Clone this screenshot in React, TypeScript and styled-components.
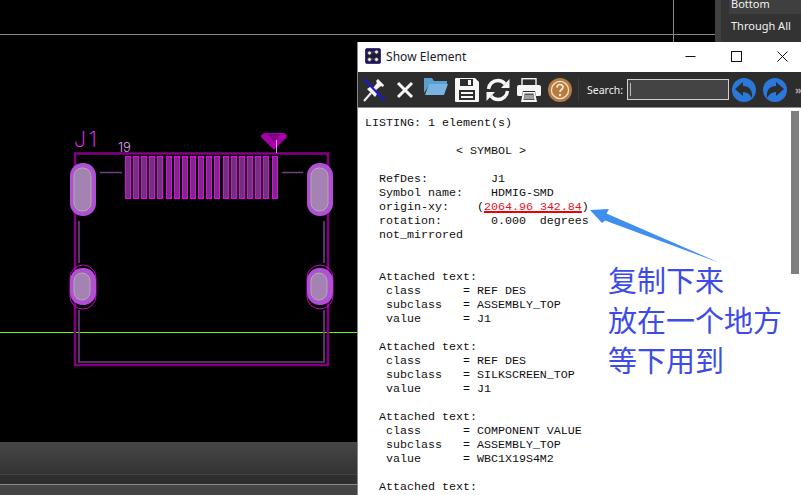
import React from "react";
import styled, { createGlobalStyle } from "styled-components";

const Global = createGlobalStyle`
  html, body { margin: 0; padding: 0; background: #000; overflow: hidden; }
  #root { width: 801px; height: 495px; }
`;

const Page = styled.div`
  position: relative;
  width: 801px;
  height: 495px;
  display: grid;
  grid-template-rows: 442px 32px 1px 9px 1px 10px;
  overflow: hidden;
  font-family: "Noto Sans", "Liberation Sans", sans-serif;
`;
const Workspace = styled.div`
  display: grid;
  grid-template-columns: 715px 86px;
  min-height: 0;
`;
const CanvasSvg = styled.svg`
  display: block;
  width: 715px;
  height: 442px;
  background: #000;
`;
const SidePanel = styled.aside`
  background: #333;
  border-left: 6px solid #404040;
  padding-left: 8px;
  font-size: 11px;
  color: #f2f2f2;
  display: flex;
  flex-direction: column;
  align-items: stretch;
`;
const SideRow = styled.div<{ $active?: boolean }>`
  height: ${(p) => (p.$active ? "14px" : "25px")};
  line-height: ${(p) => (p.$active ? "8px" : "24px")};
  padding-left: 2px;
  background: ${(p) => (p.$active ? "#3f3f3f" : "transparent")};
  white-space: nowrap;
`;
const GradientBand = styled.div`
  background: linear-gradient(#474747, #333333);
`;
const Rule = styled.div<{ $c: string }>`
  background: ${(p) => p.$c};
`;

const Window = styled.section`
  position: absolute;
  left: 357px;
  top: 42px;
  width: 444px;
  height: 453px;
  box-sizing: border-box;
  border-left: 1px solid #8a8a8a;
  background: #fff;
  display: flex;
  flex-direction: column;
`;
const TitleBar = styled.header`
  height: 30px;
  box-sizing: border-box;
  padding: 0 0 2px 7px;
  display: flex;
  align-items: center;
  background: #fff;
  flex: none;
`;
const TitleText = styled.span`
  margin-left: 5px;
  font-size: 12px;
  color: #1a1a2a;
  letter-spacing: 0.05px;
`;
const WinControls = styled.div`
  margin-left: auto;
  display: flex;
  align-items: center;
  padding-right: 13px;
  gap: 35px;
`;
const Toolbar = styled.div`
  height: 35px;
  flex: none;
  display: flex;
  align-items: center;
  background: #2d2d2d;
  border-bottom: 1px solid #8c8c8c;
  padding-left: 5px;
`;
const IconSlot = styled.span<{ $w: number; $mr: number; $mb?: number }>`
  display: flex;
  width: ${(p) => p.$w}px;
  margin-right: ${(p) => p.$mr}px;
  margin-bottom: ${(p) => p.$mb ?? 0}px;
  flex: none;
`;
const Sep = styled.span`
  width: 1px;
  height: 24px;
  background: #3b3b3b;
  margin: 0 8px 0 6px;
  flex: none;
`;
const SearchLabel = styled.label`
  color: #f0f0f0;
  font-size: 10.5px;
  font-weight: 400;
  width: 40px;
  flex: none;
  white-space: nowrap;
`;
const SearchBox = styled.div`
  width: 102px;
  height: 21px;
  box-sizing: border-box;
  border: 1px solid #d0d0d0;
  background: #444;
  margin-right: 3px;
  flex: none;
  display: flex;
  align-items: center;
  padding-left: 2px;
`;
const Caret = styled.span`
  width: 1px;
  height: 13px;
  background: #bbb;
`;
const More = styled.span`
  color: #aaa;
  font-size: 11px;
  font-weight: 700;
  margin-left: 8px;
  flex: none;
  line-height: 1;
`;
const Content = styled.div`
  position: relative;
  flex: 1;
  min-height: 0;
  overflow: hidden;
  background: #fff;
`;
const Listing = styled.pre`
  margin: 0;
  padding: 8px 0 0 7px;
  font-family: "Liberation Mono", "Courier New", monospace;
  font-size: 11.67px;
  line-height: 14px;
  color: #101010;
`;
const Coord = styled.span`
  color: #e8102a;
  text-decoration: underline;
  text-decoration-color: #f00000;
  text-decoration-thickness: 1.5px;
  text-underline-offset: 1px;
`;
const ScrollThumb = styled.div`
  position: absolute;
  right: 2px;
  top: 3px;
  width: 8px;
  height: 163px;
  background: #7f7f7f;
`;
const Note = styled.div`
  position: absolute;
  left: 608px;
  top: 259px;
  font-family: "Noto Sans CJK SC", "Noto Sans", sans-serif;
  font-size: 29px;
  line-height: 40px;
  color: #3d4ce8;
  white-space: nowrap;
`;
const ArrowSvg = styled.svg`
  position: absolute;
  left: 585px;
  top: 205px;
  width: 140px;
  height: 62px;
`;

const fingers = [125, 133, 141, 149, 157, 166, 174, 182, 190, 198, 206, 214, 223, 231, 239, 247, 255, 263, 272];

const BigPad = ({ x }: { x: number }) => (
  <g>
    <rect x={x} y={163} width={26} height={53} rx={12.5} fill="#b050d4" />
    <rect x={x + 4} y={168} width={17} height={43} rx={8} fill="#a482b4" stroke="#aeb0a0" strokeWidth={1} />
  </g>
);
const SmallPad = ({ x }: { x: number }) => (
  <g>
    <rect x={x} y={265} width={26} height={44} rx={13} fill="none" stroke="#ff00ff" strokeWidth={0.8} />
    <rect x={x} y={268} width={26} height={37} rx={12.5} fill="#b050d4" />
    <rect x={x + 4} y={273} width={16} height={27} rx={8} fill="#a482b4" stroke="#aeb0a0" strokeWidth={1} />
  </g>
);

const Canvas = () => (
  <CanvasSvg viewBox="0 0 715 442">
    <line x1={0} y1={34.5} x2={715} y2={34.5} stroke="#8a8a8a" />
    <line x1={673.5} y1={0} x2={673.5} y2={42} stroke="#8a8a8a" />
    <line x1={0} y1={332.5} x2={357} y2={332.5} stroke="#66ff00" />
    <rect x={75} y={153.5} width={253} height={211.5} fill="none" stroke="#800080" strokeWidth={2.6} />
    <path
      d="M79 221V263M79 310V362H324V310M324 263V221M100 172.5H122M282 172.5H303"
      fill="none"
      stroke="#6e3f85"
      strokeWidth={1.6}
    />
    {fingers.map((x) => (
      <rect key={x} x={x + 0.5} y={156.5} width={5} height={42} fill="#73307f" stroke="#f000f0" strokeWidth={1} />
    ))}
    <BigPad x={70} />
    <BigPad x={307} />
    <SmallPad x={70} />
    <SmallPad x={307} />
    <path d="M261 137Q261 133 266 133H282Q287 133 287 137L274 150Z" fill="#a800a8" />
    <path d="M268 134H280L274 142Z" fill="#7a0080" />
    <line x1={276.5} y1={140} x2={276.5} y2={153} stroke="#e090ff" />
    <text x={74} y={147} fill="#ff30ff" fontFamily="Inter, sans-serif" fontWeight={200} fontSize={21} letterSpacing={3}>
      J1
    </text>
    <text x={118} y={152} fill="#e0a0ff" fontFamily="Inter, sans-serif" fontWeight={300} fontSize={13}>
      19
    </text>
  </CanvasSvg>
);

const AppIcon = () => (
  <svg width="16" height="16" viewBox="0 0 16 16">
    <rect x="0.5" y="0.5" width="15" height="15" rx="1.5" fill="#1b1a3a" stroke="#4a2bb0" />
    <path d="M4 5L11 3M4 11L12 11" stroke="#6030c0" />
    <circle cx="4.5" cy="5" r="2" fill="#e8e8e0" stroke="#333" strokeWidth="0.8" />
    <circle cx="11.5" cy="4" r="2" fill="#e8e8e0" stroke="#333" strokeWidth="0.8" />
    <circle cx="4.5" cy="11.5" r="2" fill="#e8e8e0" stroke="#333" strokeWidth="0.8" />
    <circle cx="11.5" cy="11.5" r="2" fill="#e8e8e0" stroke="#333" strokeWidth="0.8" />
  </svg>
);
const MinIcon = () => (
  <svg width="11" height="11" viewBox="0 0 11 11">
    <line x1="0.5" y1="5.5" x2="10.5" y2="5.5" stroke="#111" />
  </svg>
);
const MaxIcon = () => (
  <svg width="11" height="11" viewBox="0 0 11 11">
    <rect x="0.5" y="0.5" width="10" height="10" fill="none" stroke="#111" />
  </svg>
);
const CloseIcon = () => (
  <svg width="11" height="11" viewBox="0 0 11 11">
    <path d="M0.5 0.5L10.5 10.5M10.5 0.5L0.5 10.5" stroke="#111" />
  </svg>
);
const PinIcon = () => (
  <svg width="23" height="24" viewBox="0 0 23 24">
    <path d="M1 23L8 15" stroke="#eee" strokeWidth="2" />
    <path d="M4 11L12 19L14 16L13 12L18 8L20 9L21 7L15 1L13 3L14 5L10 10L7 9Z" fill="#f4f4f4" />
    <line x1="1" y1="1" x2="22" y2="23" stroke="#1818e0" strokeWidth="2" />
  </svg>
);
const XIcon = () => (
  <svg width="18" height="18" viewBox="0 0 18 18">
    <path d="M2 2L16 16M16 2L2 16" stroke="#f6f6f6" strokeWidth="3" />
  </svg>
);
const FolderIcon = () => (
  <svg width="24" height="19" viewBox="0 0 24 19">
    <path d="M0 1H8L10 4H23V8H5L2 13L0 16Z" fill="#5b9ed0" />
    <path d="M5 7H24L20 18H1Z" fill="#78b4e2" />
  </svg>
);
const SaveIcon = () => (
  <svg width="24" height="24" viewBox="0 0 24 24">
    <path d="M1 0H20L24 4V23Q24 24 23 24H1Q0 24 0 23V1Q0 0 1 0Z" fill="#f6f6f6" />
    <rect x="5" y="1" width="13" height="7" fill="#2d2d2d" />
    <rect x="13" y="2" width="3" height="5" fill="#f6f6f6" />
    <rect x="4" y="12" width="16" height="10" fill="#2d2d2d" />
    <path d="M6 15H18M6 19H18" stroke="#f6f6f6" strokeWidth="1.8" />
  </svg>
);
const RefreshIcon = () => (
  <svg width="24" height="24" viewBox="0 0 24 24" fill="none">
    <path d="M2.5 11C3 6 7 2.5 12 2.5C15 2.5 17.5 4 19 6" stroke="#f6f6f6" strokeWidth="3.4" />
    <path d="M23.5 1V10H15Z" fill="#f6f6f6" />
    <path d="M21.5 13C21 18 17 21.5 12 21.5C9 21.5 6.5 20 5 18" stroke="#f6f6f6" strokeWidth="3.4" />
    <path d="M0.5 23V14H9Z" fill="#f6f6f6" />
  </svg>
);
const PrintIcon = () => (
  <svg width="24" height="24" viewBox="0 0 24 24">
    <rect x="5" y="0.7" width="14" height="7" fill="none" stroke="#f6f6f6" strokeWidth="1.4" />
    <path d="M2 7H22Q24 7 24 9V17Q24 18 22 18H19L18 13H6L5 18H2Q0 18 0 17V9Q0 7 2 7Z" fill="#f6f6f6" />
    <path d="M6 14H18L20 24H4Z" fill="#f6f6f6" />
    <path d="M7.5 15.5H16.5L17.5 22H6.5Z" fill="#55585a" />
    <path d="M7.5 18H16.5M7 20H17" stroke="#f6f6f6" strokeWidth="0.9" />
  </svg>
);
const HelpIcon = () => (
  <svg width="24" height="24" viewBox="0 0 24 24">
    <circle cx="12" cy="12" r="12" fill="#b87c3c" />
    <circle cx="12" cy="12" r="8.6" fill="none" stroke="#f3e6d6" strokeWidth="1.3" />
    <path d="M9 9.5C9 7.5 10.5 6.5 12 6.5C13.6 6.5 15 7.6 15 9.2C15 11.4 12 11.6 12 14" fill="none" stroke="#f6ece0" strokeWidth="1.7" />
    <circle cx="12" cy="17" r="1.2" fill="#f6ece0" />
  </svg>
);
const NavIcon = ({ flip }: { flip?: boolean }) => (
  <svg width="24" height="24" viewBox="0 0 24 24">
    <g transform={flip ? "translate(24 0) scale(-1 1)" : undefined}>
      <circle cx="12" cy="12" r="12" fill="#2a78d8" />
      <path d="M3 11L11 4V8C17 8 21 12 20 20C18 16 15 14 11 14V18Z" fill="#2d2d2d" />
    </g>
  </svg>
);

const listingHead = `LISTING: 1 element(s)

             < SYMBOL >

  RefDes:         J1
  Symbol name:    HDMIG-SMD
  origin-xy:    (`;
const listingTail = `)
  rotation:       0.000  degrees
  not_mirrored


  Attached text:
   class      = REF DES
   subclass   = ASSEMBLY_TOP
   value      = J1

  Attached text:
   class      = REF DES
   subclass   = SILKSCREEN_TOP
   value      = J1

  Attached text:
   class      = COMPONENT VALUE
   subclass   = ASSEMBLY_TOP
   value      = WBC1X19S4M2

  Attached text:`;

export default function App() {
  return (
    <Page>
      <Global />
      <Workspace>
        <Canvas />
        <SidePanel>
          <SideRow $active>Bottom</SideRow>
          <SideRow>Through All</SideRow>
        </SidePanel>
      </Workspace>
      <GradientBand />
      <Rule $c="#444" />
      <Rule $c="#2e2e2e" />
      <Rule $c="#8a8a8a" />
      <Rule $c="#444" />

      <Window>
        <TitleBar>
          <AppIcon />
          <TitleText>Show Element</TitleText>
          <WinControls>
            <MinIcon />
            <MaxIcon />
            <CloseIcon />
          </WinControls>
        </TitleBar>
        <Toolbar>
          <IconSlot $w={23} $mr={10}><PinIcon /></IconSlot>
          <IconSlot $w={18} $mr={10}><XIcon /></IconSlot>
          <IconSlot $w={24} $mr={7} $mb={6}><FolderIcon /></IconSlot>
          <IconSlot $w={24} $mr={7}><SaveIcon /></IconSlot>
          <IconSlot $w={24} $mr={7}><RefreshIcon /></IconSlot>
          <IconSlot $w={24} $mr={7}><PrintIcon /></IconSlot>
          <IconSlot $w={24} $mr={0}><HelpIcon /></IconSlot>
          <Sep />
          <SearchLabel>Search:</SearchLabel>
          <SearchBox><Caret /></SearchBox>
          <IconSlot $w={24} $mr={7}><NavIcon /></IconSlot>
          <IconSlot $w={24} $mr={0}><NavIcon flip /></IconSlot>
          <More>»</More>
        </Toolbar>
        <Content>
          <Listing>
            {listingHead}
            <Coord>2064.96 342.84</Coord>
            {listingTail}
          </Listing>
          <ScrollThumb />
        </Content>
      </Window>

      <ArrowSvg viewBox="585 205 140 62">
        <path d="M590 210L609 209L606.500 213.500L720 263L605 220.500L602 223Z" fill="#3f8ef0" />
      </ArrowSvg>
      <Note>
        复制下来
        <br />
        放在一个地方
        <br />
        等下用到
      </Note>
    </Page>
  );
}
